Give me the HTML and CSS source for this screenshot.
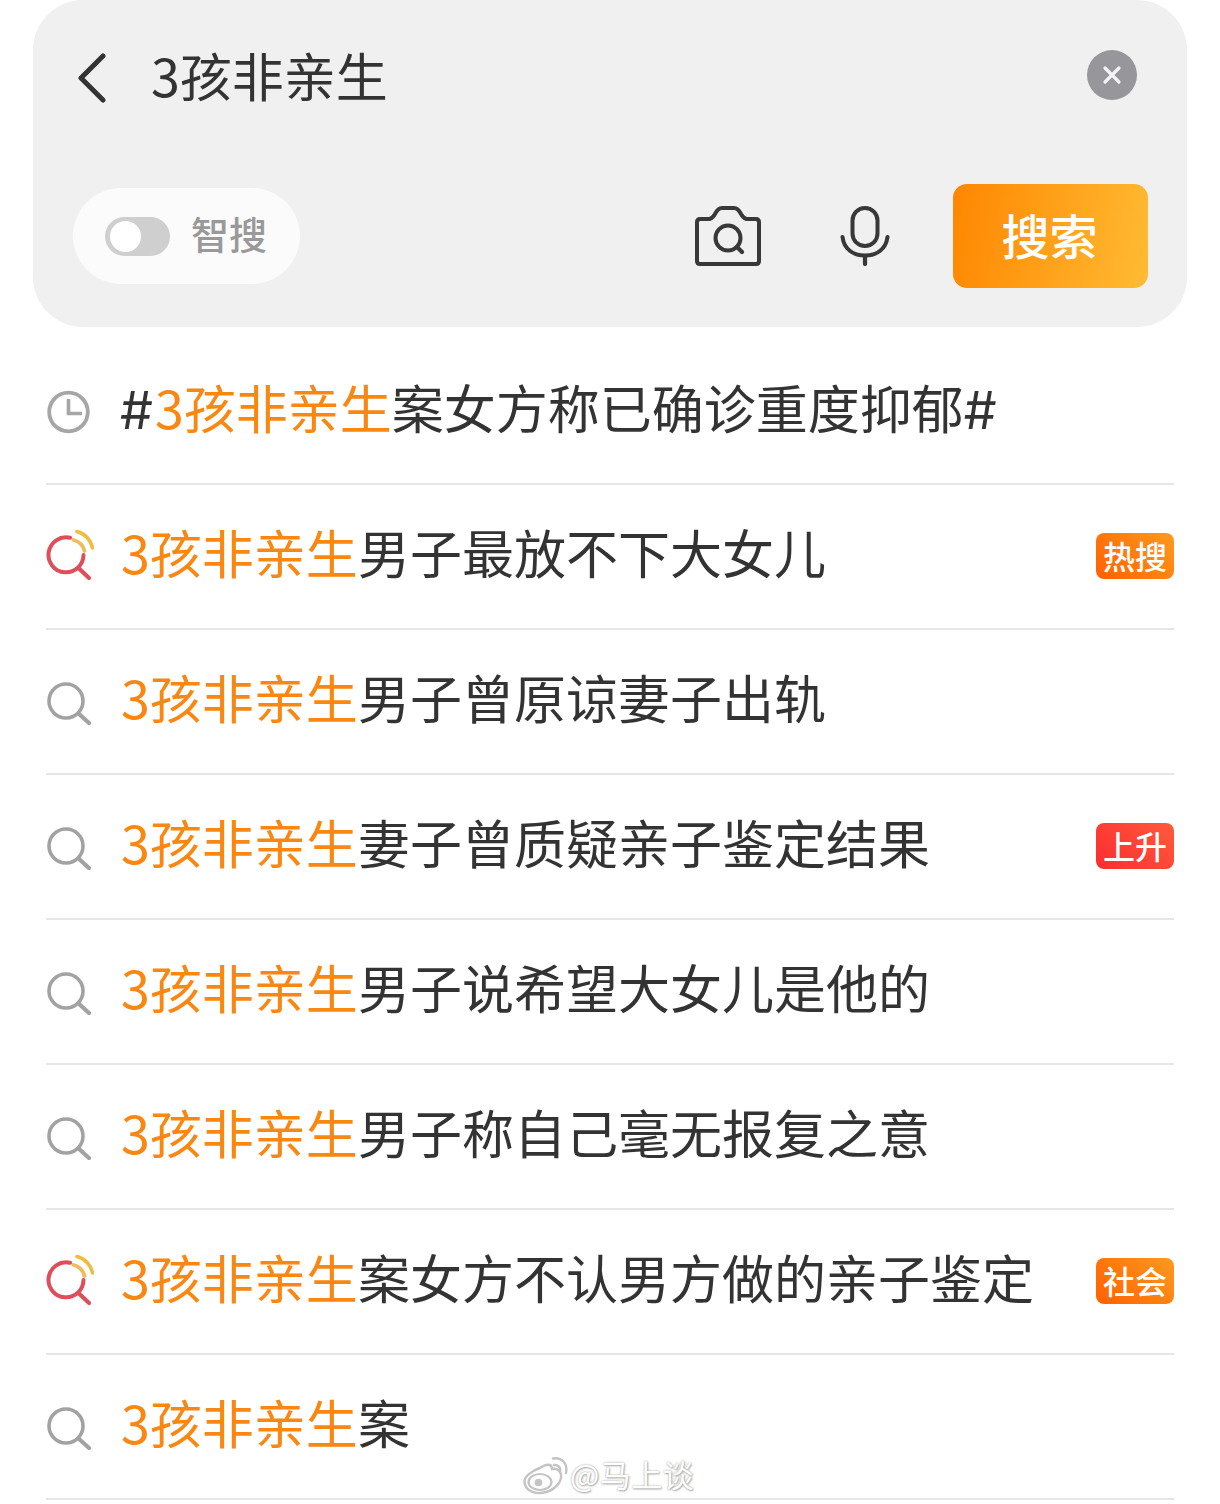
FILE: index.html
```html
<!DOCTYPE html>
<html lang="zh-CN">

<head>
    <meta charset="UTF-8">
    <meta name="viewport" content="width=device-width, initial-scale=1.0">
    <title>3孩非亲生</title>
    <link rel="stylesheet" href="styles.css">
</head>

<body>
    <svg class="sprites" width="0" height="0">
        <symbol id="icon-search" viewBox="0 0 46 46">
            <circle cx="20" cy="22" r="17" fill="none" stroke="#a2a2a2" stroke-width="3.6" />
            <path d="M32.500 34.500 L43 44" fill="none" stroke="#a2a2a2" stroke-width="4.2" stroke-linecap="round" />
        </symbol>
        <symbol id="icon-hot" viewBox="0 0 48 54">
            <path d="M24 9.800 A17.500 17.500 0 1 0 37.500 27" fill="none" stroke="#de5059" stroke-width="4" stroke-linecap="round" />
            <path d="M33 40.500 L43 50" fill="none" stroke="#de5059" stroke-width="4.200" stroke-linecap="round" />
            <path d="M27.500 12 A15 15 0 0 1 38.500 23" fill="none" stroke="#f0bc5a" stroke-width="3.800" stroke-linecap="round" />
            <path d="M31 3.500 A21 21 0 0 1 46.500 20" fill="none" stroke="#efbd3e" stroke-width="3.600" stroke-linecap="round" />
        </symbol>
    </svg>

    <div class="search-panel">
        <div class="query-row">
            <svg class="back-icon" width="30" height="50" viewBox="0 0 30 50">
                <path d="M26 3 L4 25 L26 47" fill="none" stroke="#333" stroke-width="5" stroke-linecap="round" stroke-linejoin="round" />
            </svg>
            <span class="query-text">3孩非亲生</span>
            <span class="clear-btn">
                <svg width="20" height="20" viewBox="0 0 20 20">
                    <path d="M3 3 L17 17 M17 3 L3 17" stroke="#f4f4f4" stroke-width="3.200" stroke-linecap="round" />
                </svg>
            </span>
        </div>
        <div class="action-row">
            <div class="smart-pill">
                <span class="toggle"><span class="toggle-knob"></span></span>
                <span class="smart-label">智搜</span>
            </div>
            <svg class="camera-icon" width="66" height="60" viewBox="0 0 66 60">
                <path d="M5 13 H14 C17 13 18 11 20 8 C22 4 24 2 27 2 H39 C42 2 44 4 46 8 C48 11 49 13 52 13 H61 C63 13 64 14.500 64 16.500 V55 C64 57 63 58 61 58 H5 C3 58 2 57 2 55 V16.500 C2 14.500 3 13 5 13 Z" fill="none" stroke="#383838" stroke-width="4" stroke-linejoin="round" />
                <circle cx="33" cy="32" r="12.500" fill="none" stroke="#383838" stroke-width="4" />
                <path d="M42 41 L47 46" stroke="#383838" stroke-width="4.200" stroke-linecap="round" />
            </svg>
            <svg class="mic-icon" width="50" height="60" viewBox="0 0 50 60">
                <rect x="12.500" y="2" width="25" height="38" rx="12.500" fill="none" stroke="#383838" stroke-width="4" />
                <path d="M2.500 31 C4 43 13 49.500 25 49.500 C37 49.500 46 43 47.500 31" fill="none" stroke="#383838" stroke-width="4" stroke-linecap="round" />
                <path d="M25 50 V58" stroke="#383838" stroke-width="4.200" stroke-linecap="round" />
            </svg>
            <button class="search-btn"><span class="search-btn-label">搜索</span></button>
        </div>
    </div>

    <ul class="suggest-list">
        <li class="suggest-item">
            <svg class="item-icon" width="46" height="46" viewBox="0 0 46 46">
                <circle cx="22.500" cy="23" r="19.300" fill="none" stroke="#a6a6a6" stroke-width="3.800" />
                <path d="M22.500 10 V24.500 H36" fill="none" stroke="#a6a6a6" stroke-width="3.600" />
            </svg>
            <span class="item-text"><span class="hash hash-first">#</span><em>3孩非亲生</em>案女方称已确诊重度抑郁<span class="hash">#</span></span>
        </li>
        <li class="suggest-item">
            <svg class="item-icon hot" width="48" height="54"><use href="#icon-hot" /></svg>
            <span class="item-text"><em>3孩非亲生</em>男子最放不下大女儿</span>
            <span class="tag tag-orange">热搜</span>
        </li>
        <li class="suggest-item">
            <svg class="item-icon" width="46" height="46"><use href="#icon-search" /></svg>
            <span class="item-text"><em>3孩非亲生</em>男子曾原谅妻子出轨</span>
        </li>
        <li class="suggest-item">
            <svg class="item-icon" width="46" height="46"><use href="#icon-search" /></svg>
            <span class="item-text"><em>3孩非亲生</em>妻子曾质疑亲子鉴定结果</span>
            <span class="tag tag-red">上升</span>
        </li>
        <li class="suggest-item">
            <svg class="item-icon" width="46" height="46"><use href="#icon-search" /></svg>
            <span class="item-text"><em>3孩非亲生</em>男子说希望大女儿是他的</span>
        </li>
        <li class="suggest-item">
            <svg class="item-icon" width="46" height="46"><use href="#icon-search" /></svg>
            <span class="item-text"><em>3孩非亲生</em>男子称自己毫无报复之意</span>
        </li>
        <li class="suggest-item">
            <svg class="item-icon hot" width="48" height="54"><use href="#icon-hot" /></svg>
            <span class="item-text"><em>3孩非亲生</em>案女方不认男方做的亲子鉴定</span>
            <span class="tag tag-orange">社会</span>
        </li>
        <li class="suggest-item">
            <svg class="item-icon" width="46" height="46"><use href="#icon-search" /></svg>
            <span class="item-text"><em>3孩非亲生</em>案</span>
        </li>
    </ul>

    <!-- watermark sits on top of the last row -->
    <div class="watermark">
        <svg width="46" height="40" viewBox="0 0 46 40">
            <path d="M17 13 C24 8 29 9 29 14 C34 13 39 16 38 23 C36 32 26 38 16 38 C7 38 1.500 33 1.500 26 C1.500 22 8 16 17 13 Z" fill="#fff" stroke="#c4c4c4" stroke-width="2.400" />
            <ellipse cx="17" cy="27" rx="11.500" ry="8" fill="#fff" stroke="#c4c4c4" stroke-width="2.200" />
            <circle cx="15.500" cy="27.500" r="3.800" fill="#c4c4c4" />
            <path d="M31 10 C35 9.500 38 12.500 37 17" fill="none" stroke="#c4c4c4" stroke-width="2.400" stroke-linecap="round" />
            <path d="M30 3.500 C39 2 45 9 43 18" fill="none" stroke="#c4c4c4" stroke-width="2.400" stroke-linecap="round" />
        </svg>
        <span class="watermark-text">@马上谈</span>
    </div>
</body>

</html>
```

FILE: styles.css
```css
* {
    box-sizing: border-box;
}

body {
    position: relative;
    margin: 0;
    height: 1504px;
    overflow: hidden;
    background-color: #fff;
    font-family: "Noto Sans CJK SC", "Noto Sans", sans-serif;
}

.sprites {
    position: absolute;
}

.search-panel {
    margin: 0 33px;
    height: 327px;
    padding: 0 39px 0 40px;
    background-color: #f0f0f0;
    border-radius: 50px;
}

.query-row {
    display: flex;
    align-items: center;
    height: 150px;
    padding: 0 11px 0 4px;
}

.back-icon {
    flex: none;
    margin-top: 5px;
}

.query-text {
    margin-left: 44px;
    font-size: 52px;
    line-height: 1;
    color: #333;
}

.clear-btn {
    display: flex;
    align-items: center;
    justify-content: center;
    width: 50px;
    height: 50px;
    margin-left: auto;
    border-radius: 50%;
    background-color: #97979b;
}

.action-row {
    display: flex;
    align-items: center;
    margin-top: 34px;
}

.smart-pill {
    display: flex;
    align-items: center;
    width: 227px;
    height: 96px;
    padding-left: 32px;
    border-radius: 48px;
    background-color: #fbfbfb;
}

.toggle {
    display: flex;
    align-items: center;
    width: 65px;
    height: 39px;
    padding-left: 5px;
    border-radius: 20px;
    background-color: #cfcfcf;
}

.toggle-knob {
    width: 31px;
    height: 31px;
    border-radius: 50%;
    background-color: #fff;
}

.smart-label {
    margin-left: 21px;
    margin-bottom: 7px;
    font-size: 38px;
    font-weight: 500;
    line-height: 1;
    color: #999;
}

.camera-icon {
    margin-left: 395px;
}

.mic-icon {
    margin-left: 79px;
}

.search-btn {
    width: 195px;
    height: 104px;
    margin-left: auto;
    border: 0;
    border-radius: 14px;
    background: linear-gradient(100deg, #ff8600, #ffbb33);
    font-family: inherit;
    font-size: 48px;
    font-weight: 500;
    color: #fff;
}

.search-btn-label {
    position: relative;
    top: -2px;
    left: -1px;
}

.suggest-list {
    margin: 13px 46px 0;
    padding: 0;
    list-style: none;
}

.suggest-item {
    display: flex;
    align-items: center;
    height: 145px;
    border-bottom: 2px solid #e6e6e6;
}

.item-icon {
    flex: none;
    margin-right: 29px;
}

.item-icon.hot {
    margin-top: -4px;
    margin-right: 27px;
}

.item-text {
    margin-bottom: 10px;
    font-size: 52px;
    line-height: 1;
    color: #333;
    white-space: nowrap;
}

.item-text em {
    font-style: normal;
    color: #f98712;
}

.hash {
    font-family: "Inter", sans-serif;
    line-height: 0;
    letter-spacing: 1px;
}

.hash-first {
    margin-left: -1px;
    letter-spacing: 2px;
}

.tag {
    width: 78px;
    height: 46px;
    margin-top: -2px;
    margin-left: auto;
    border-radius: 8px;
    font-size: 32px;
    font-weight: 500;
    line-height: 44px;
    text-align: center;
    color: #fff;
}

.tag-orange {
    background: linear-gradient(45deg, #ff6000, #ff9a1e);
}

.tag-red {
    background: linear-gradient(45deg, #fb2c30, #ff5a3c);
}

.watermark {
    position: absolute;
    left: 523px;
    top: 1455px;
    display: flex;
    align-items: center;
    gap: 1px;
}

.watermark-text {
    margin-bottom: 2px;
    font-size: 31px;
    line-height: 38px;
    letter-spacing: 0.5px;
    color: #fff;
    text-shadow: 0 0 2px #9a9a9a, 1px 1px 2px #b0b0b0;
}
```
